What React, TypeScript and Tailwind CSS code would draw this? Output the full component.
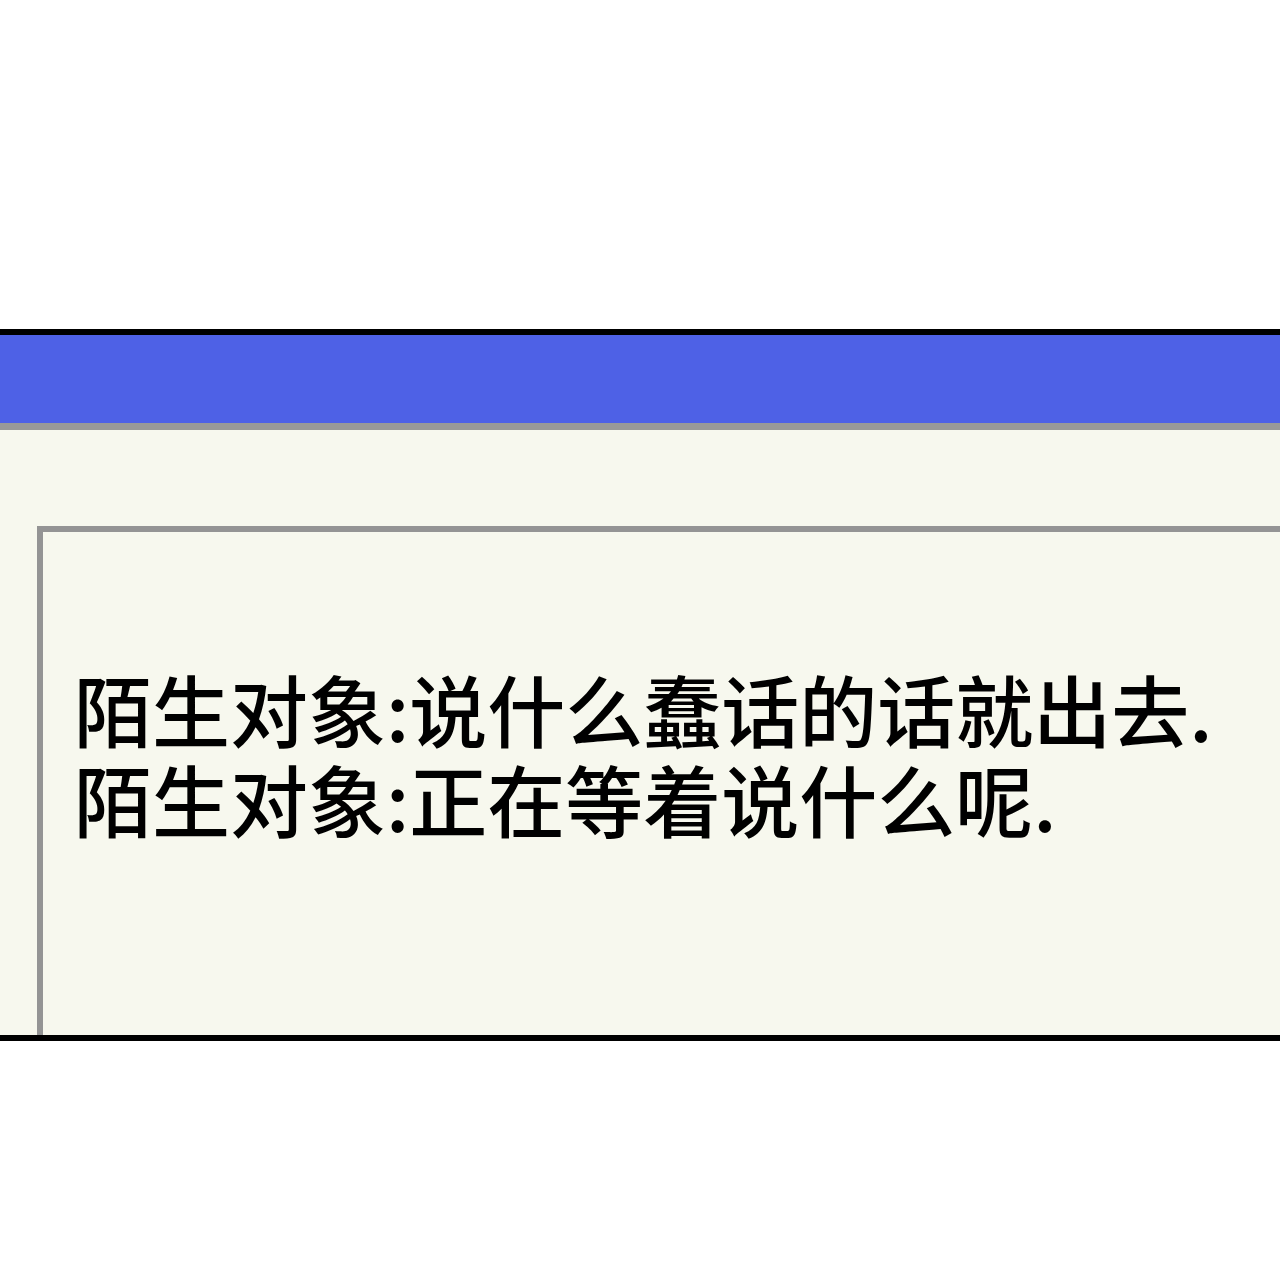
export default function App() {
  return (
    <div className="w-[1280px] h-[1280px] bg-white flex flex-col">
      <div className="h-[329px]" />
      <div className="border-y-[6px] border-black flex flex-col">
        <div className="h-[88px] bg-[#4e61e6] border-b-[7px] border-[#999999] box-content" />
        <div className="h-[605px] bg-[#f7f8ee] pt-[96px] pl-[37px] flex flex-col">
          <div
            className="flex-1 border-l-[6px] border-t-[6px] border-[#949494] pl-[31px] pt-[131px] text-black text-[78px] leading-[90px] font-medium"
            style={{ fontFamily: '"Noto Sans CJK SC", sans-serif' }}
          >
            <div>陌生对象:说什么蠢话的话就出去.</div>
            <div>陌生对象:正在等着说什么呢.</div>
          </div>
        </div>
      </div>
    </div>
  );
}
